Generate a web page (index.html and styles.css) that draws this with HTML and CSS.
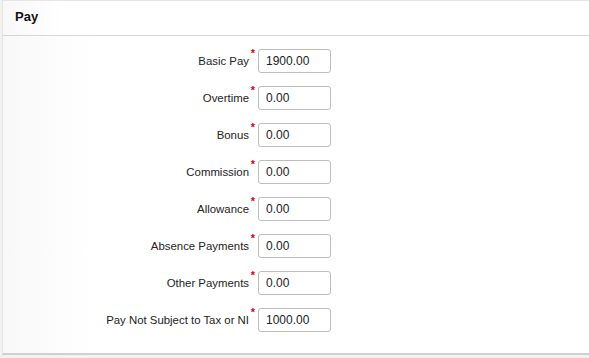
FILE: index.html
```html
<!DOCTYPE html>
<html>
<head>
<meta charset="utf-8">
<link rel="stylesheet" href="styles.css">
</head>
<body>
<div class="panel">
  <div class="panel-header">Pay</div>
  <div class="panel-body">
    <div class="row"><label class="lbl">Basic Pay<span class="req">*</span></label><input class="field" value="1900.00"></div>
    <div class="row"><label class="lbl">Overtime<span class="req">*</span></label><input class="field" value="0.00"></div>
    <div class="row"><label class="lbl">Bonus<span class="req">*</span></label><input class="field" value="0.00"></div>
    <div class="row"><label class="lbl">Commission<span class="req">*</span></label><input class="field" value="0.00"></div>
    <div class="row"><label class="lbl">Allowance<span class="req">*</span></label><input class="field" value="0.00"></div>
    <div class="row"><label class="lbl">Absence Payments<span class="req">*</span></label><input class="field" value="0.00"></div>
    <div class="row"><label class="lbl">Other Payments<span class="req">*</span></label><input class="field" value="0.00"></div>
    <div class="row"><label class="lbl">Pay Not Subject to Tax or NI<span class="req">*</span></label><input class="field" value="1000.00"></div>
  </div>
</div>
</body>
</html>
```
FILE: styles.css
```css
html, body {
  margin: 0;
  padding: 0;
  background: #f2f2f2;
  font-family: "Liberation Sans", Arial, sans-serif;
}
.panel {
  margin-left: 2px;
  width: 587px;
  height: 355px;
  box-sizing: border-box;
  background: linear-gradient(to right, #f8f8f8 0px, #ffffff 90px);
  border-top: 1px solid #e6e6e6;
  border-left: 1px solid #e3e3e3;
  border-bottom: 2px solid #d0d0d0;
}
.panel-header {
  height: 35px;
  box-sizing: border-box;
  padding: 8px 0 0 12px;
  font-size: 13px;
  font-weight: bold;
  color: #111;
  border-bottom: 1px solid #d6d6d6;
  background: linear-gradient(to right, #f8f8f8 0px, #ffffff 60px);
}
.panel-body {
  padding-top: 13px;
  display: flex;
  flex-direction: column;
  gap: 13px;
}
.row {
  display: flex;
  align-items: center;
  height: 24px;
}
.lbl {
  width: 253px;
  box-sizing: border-box;
  padding-right: 7px;
  text-align: right;
  font-size: 11.4px;
  color: #222;
  position: relative;
}
.req {
  position: absolute;
  right: 1px;
  top: -8px;
  color: #d0021b;
  font-size: 11px;
  font-weight: bold;
}
.field {
  width: 73px;
  height: 24px;
  box-sizing: border-box;
  margin: 0 0 0 2px;
  padding: 0 7px;
  border: 1px solid #bdbdbd;
  border-radius: 3px;
  font-family: "Liberation Sans", Arial, sans-serif;
  font-size: 12px;
  color: #222;
  background: #fff;
}
```
